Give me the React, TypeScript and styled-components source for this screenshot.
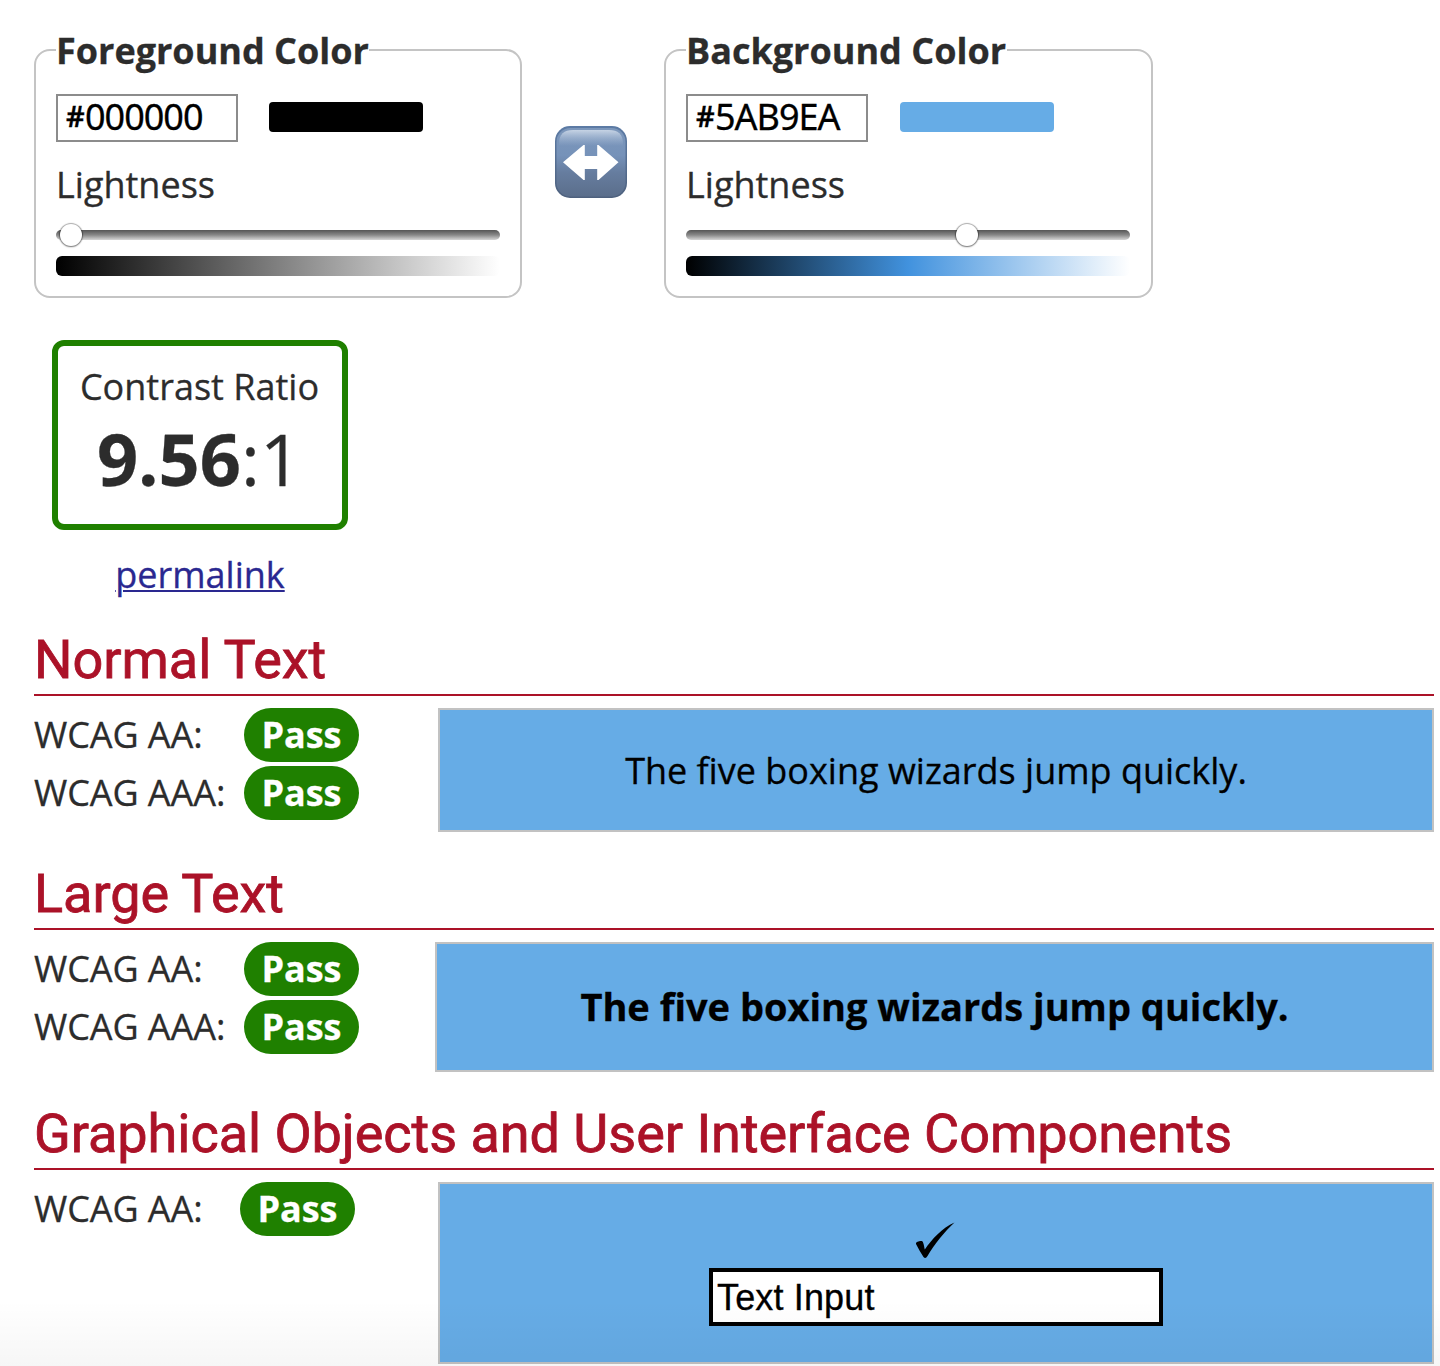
import React from "react";
import styled, { createGlobalStyle } from "styled-components";

const Global = createGlobalStyle`
  *, *::before, *::after { box-sizing: border-box; }
  html, body { margin: 0; background: #fff; }
  body { font-family: "Open Sans", "Noto Sans", sans-serif; font-size: 36px; color: #2c2c2c; overflow: hidden; -webkit-text-stroke-width: 0.3px; }
`;

const Page = styled.main`
  width: 1440px;
  height: 1366px;
  padding: 23px 6px 0 34px;
  position: relative;
  overflow: hidden;
`;

const Pickers = styled.div`
  display: flex;
  align-items: flex-start;
`;

const Panel = styled.fieldset<{ $width: number }>`
  width: ${(p) => p.$width}px;
  height: 275px;
  margin: 0;
  min-width: 0;
  padding: 17px 20px 0;
  border: 2px solid #c4c4c4;
  border-radius: 16px;
`;

const Legend = styled.legend<{ $width: number }>`
  width: ${(p) => p.$width}px;
  height: 54px;
  padding: 0;
  line-height: 56px;
  font-weight: 700;
  white-space: nowrap;
`;

const ColorRow = styled.div`
  display: flex;
  align-items: center;
`;

const HexField = styled.div`
  width: 182px;
  height: 48px;
  display: flex;
  padding-left: 8px;
  border: 2px solid #8c8c8c;
  color: #000;
  font-family: "Noto Sans", sans-serif;
  white-space: nowrap;
`;

const Hash = styled.span`
  width: 19px;
  font-size: 29px;
  font-weight: 600;
  line-height: 40px;
  letter-spacing: -2px;
`;

const HexDigits = styled.span`
  font-size: 36px;
  line-height: 41px;
  letter-spacing: -1px;
`;

const Swatch = styled.div<{ $color: string; $gap: number }>`
  width: 154px;
  height: 30px;
  margin: 0 0 2px ${(p) => p.$gap}px;
  border-radius: 4px;
  background: ${(p) => p.$color};
`;

const FieldLabel = styled.div`
  margin-top: 18px;
  height: 48px;
  line-height: 50px;
`;

const Track = styled.div`
  width: 444px;
  height: 10px;
  margin-top: 22px;
  border-radius: 5px;
  background: linear-gradient(#555, #888 50%, #d6d6d6);
  position: relative;
`;

const Thumb = styled.span<{ $x: number }>`
  position: absolute;
  left: ${(p) => p.$x}px;
  top: -6px;
  width: 22px;
  height: 22px;
  border-radius: 50%;
  background: #fff;
  box-shadow: 0 0 1px 1px rgba(0, 0, 0, 0.32), 0 1px 2px rgba(0, 0, 0, 0.3);
`;

const Ramp = styled.div<{ $stops: string }>`
  width: 444px;
  height: 20px;
  margin-top: 16px;
  border-radius: 6px;
  background: linear-gradient(to right, ${(p) => p.$stops});
`;

const SwapButton = styled.button`
  width: 72px;
  height: 72px;
  margin: 103px 37px 0 33px;
  padding: 0;
  border: 0;
  background: none;
  display: block;
`;

const Result = styled.section`
  width: 296px;
  margin: 42px 0 0 18px;
  text-align: center;
`;

const RatioBox = styled.div`
  height: 190px;
  padding-top: 16px;
  border: 6px solid #1f8000;
  border-radius: 12px;
`;

const RatioLabel = styled.div`
  padding-right: 1px;
  line-height: 50px;
  white-space: nowrap;
`;

const RatioValue = styled.div`
  padding-right: 2px;
  font-size: 72px;
  line-height: 92px;
  white-space: nowrap;
`;

const Permalink = styled.a`
  display: block;
  margin-top: 20px;
  line-height: 50px;
  color: #2a2890;
  text-decoration: underline;
  text-decoration-thickness: 2px;
  text-underline-offset: 2px;
`;

const Heading = styled.h2`
  height: 62px;
  margin: 0;
  border-bottom: 2px solid #ab1228;
  color: #ab1228;
  font-family: Roboto, sans-serif;
  font-size: 54px;
  font-weight: 400;
  line-height: 52px;
  letter-spacing: -0.03px;
  -webkit-text-stroke-width: 0.8px;
  white-space: nowrap;
`;

const Section = styled.section<{ $top: number }>`
  margin-top: ${(p) => p.$top}px;
`;

const SectionBody = styled.div`
  display: flex;
  justify-content: space-between;
  padding-top: 12px;
`;

const Levels = styled.div`
  display: flex;
  flex-direction: column;
  gap: 4px;
`;

const Level = styled.div<{ $label: number }>`
  display: grid;
  grid-template-columns: ${(p) => p.$label}px 115px;
  height: 54px;
  line-height: 53px;
  letter-spacing: -0.08px;
  white-space: nowrap;
`;

const Badge = styled.strong`
  border-radius: 27px;
  background: #1f8000;
  color: #fff;
  font-weight: 700;
  text-align: center;
`;

const Sample = styled.div<{ $width: number; $height: number; $bold?: boolean }>`
  width: ${(p) => p.$width}px;
  height: ${(p) => p.$height}px;
  display: flex;
  flex-direction: column;
  align-items: center;
  justify-content: center;
  padding-bottom: ${(p) => (p.$bold ? 2 : 0)}px;
  border: 2px solid #c2c2c2;
  background: #66ace6;
  color: #000;
  font-size: ${(p) => (p.$bold ? 38 : 36)}px;
  font-weight: ${(p) => (p.$bold ? 700 : 400)};
  white-space: nowrap;
`;

const CheckMark = styled.svg`
  width: 40px;
  height: 37px;
  margin: 2px 2px 0 0;
`;

const TextField = styled.input`
  width: 454px;
  height: 58px;
  margin-top: 9px;
  padding: 2px 4px 0;
  border: 4px solid #000;
  border-radius: 0;
  background: #fff;
  color: #000;
  font-family: "Liberation Sans", Arial, sans-serif;
  font-size: 36px;
  letter-spacing: 0.15px;
  -webkit-text-stroke-width: 0.3px;
  outline: none;
`;

const BottomFade = styled.div`
  position: absolute;
  inset: auto 0 0 0;
  height: 66px;
  background: linear-gradient(rgba(0, 0, 0, 0), rgba(0, 0, 0, 0.035));
  pointer-events: none;
`;

function SwapIcon() {
  return (
    <svg width="72" height="72" viewBox="0 0 72 72">
      <defs>
        <linearGradient id="face" x1="0" y1="0" x2="0" y2="1">
          <stop offset="0" stopColor="#7c97bb" />
          <stop offset="0.4" stopColor="#7692b9" />
          <stop offset="0.65" stopColor="#667d9f" />
          <stop offset="1" stopColor="#5b6e8b" />
        </linearGradient>
        <linearGradient id="edge" x1="0" y1="0" x2="0" y2="1">
          <stop offset="0" stopColor="#5c7ba5" />
          <stop offset="1" stopColor="#4e617e" />
        </linearGradient>
        <linearGradient id="gloss" x1="0" y1="0" x2="0" y2="1">
          <stop offset="0" stopColor="#c6d3e4" />
          <stop offset="1" stopColor="#a3b8d4" stopOpacity="0" />
        </linearGradient>
      </defs>
      <rect width="72" height="72" rx="15" fill="url(#edge)" />
      <rect x="1.5" y="2" width="69" height="68.5" rx="14" fill="url(#face)" />
      <path d="M4 18C4 8 9 4 18 4H54C63 4 68 8 68 18V20H4Z" fill="url(#gloss)" />
      <path d="M8 36.300 28.500 19H29.800V30H42.200V19H43.500L63.500 36.300 43.500 54H42.200V43H29.800V54H28.500Z" fill="#fff" />
    </svg>
  );
}

interface PickerProps {
  title: string;
  titleWidth: number;
  width: number;
  hex: string;
  color: string;
  swatchGap: number;
  thumb: number;
  stops: string;
}

function ColorPicker({ title, titleWidth, width, hex, color, swatchGap, thumb, stops }: PickerProps) {
  return (
    <Panel $width={width}>
      <Legend $width={titleWidth}>{title}</Legend>
      <ColorRow>
        <HexField>
          <Hash>#</Hash>
          <HexDigits>{hex}</HexDigits>
        </HexField>
        <Swatch $color={color} $gap={swatchGap} />
      </ColorRow>
      <FieldLabel>Lightness</FieldLabel>
      <Track><Thumb $x={thumb} /></Track>
      <Ramp $stops={stops} />
    </Panel>
  );
}

function PassLevels({ levels, label }: { levels: string[]; label: number }) {
  return (
    <Levels>
      {levels.map((level) => (
        <Level key={level} $label={label}>
          <span>WCAG {level}:</span>
          <Badge>Pass</Badge>
        </Level>
      ))}
    </Levels>
  );
}

export default function App() {
  return (
    <>
      <Global />
      <Page>
        <Pickers>
          <ColorPicker title="Foreground Color" titleWidth={313} width={488} hex="000000" color="#000" swatchGap={31} thumb={4} stops="#000, #808080 50%, #fff" />
          <SwapButton aria-label="Swap colors"><SwapIcon /></SwapButton>
          <ColorPicker title="Background Color" titleWidth={321} width={489} hex="5AB9EA" color="#66ace6" swatchGap={32} thumb={270} stops="#000, #4192de 50%, #fff" />
        </Pickers>
        <Result>
          <RatioBox>
            <RatioLabel>Contrast Ratio</RatioLabel>
            <RatioValue><b>9.56</b>:1</RatioValue>
          </RatioBox>
          <Permalink href="#permalink">permalink</Permalink>
        </Result>
        <Section $top={34}>
          <Heading>Normal Text</Heading>
          <SectionBody>
            <PassLevels levels={["AA", "AAA"]} label={210} />
            <Sample $width={996} $height={124}>The five boxing wizards jump quickly.</Sample>
          </SectionBody>
        </Section>
        <Section $top={36}>
          <Heading>Large Text</Heading>
          <SectionBody>
            <PassLevels levels={["AA", "AAA"]} label={210} />
            <Sample $width={999} $height={130} $bold>The five boxing wizards jump quickly.</Sample>
          </SectionBody>
        </Section>
        <Section $top={36}>
          <Heading>Graphical Objects and User Interface Components</Heading>
          <SectionBody>
            <PassLevels levels={["AA"]} label={206} />
            <Sample $width={996} $height={182}>
              <CheckMark viewBox="0 0 40 37">
                <path d="M39.500 0.500C30 9 19 23 12.500 34Q10.500 37.500 8.500 35Q4.500 29 1 22C0.500 19.500 5 18.500 7 19C8.500 20 9 24 9.800 27.500C17 17 27 6 39.500 0.500Z" fill="#000" />
              </CheckMark>
              <TextField defaultValue="Text Input" aria-label="Text Input" />
            </Sample>
          </SectionBody>
        </Section>
        <BottomFade />
      </Page>
    </>
  );
}
